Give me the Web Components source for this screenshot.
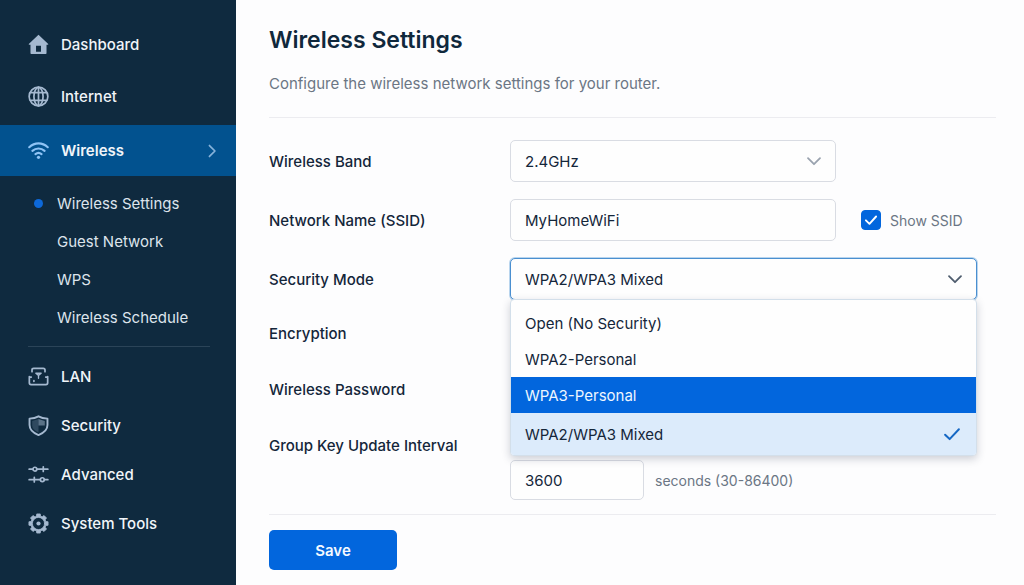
<!DOCTYPE html>
<html lang="en">
<head>
<meta charset="utf-8">
<meta name="viewport" content="width=device-width, initial-scale=1">
<title>Wireless Settings</title>
<style>
  html, body { margin: 0; min-height: 100%; }
  body {
    background: #fdfdfe;
    color: #14263a;
    font-family: Inter, "Liberation Sans", sans-serif;
    font-size: 15px;
    line-height: 25px;
    --navy: #0f2a3f;
    --blue: #0266dd;
    --muted: #6b7684;
    --line: #ececf0;
  }
</style>
</head>
<body>
<router-app>
  <side-nav slot="nav">
    <nav-item icon="home" class="tall">Dashboard</nav-item>
    <nav-item icon="globe" class="tall">Internet</nav-item>
    <nav-item icon="wifi" active>Wireless</nav-item>
    <sub-nav>
      <sub-item current>Wireless Settings</sub-item>
      <sub-item>Guest Network</sub-item>
      <sub-item>WPS</sub-item>
      <sub-item>Wireless Schedule</sub-item>
    </sub-nav>
    <nav-item icon="lan">LAN</nav-item>
    <nav-item icon="shield">Security</nav-item>
    <nav-item icon="sliders">Advanced</nav-item>
    <nav-item icon="gear">System Tools</nav-item>
  </side-nav>
  <page-header>
    <span slot="title">Wireless Settings</span>
    Configure the wireless network settings for your router.
  </page-header>
  <settings-form>
    <select-field label="Wireless Band" value="2.4GHz"></select-field>
    <text-field label="Network Name (SSID)" value="MyHomeWiFi">
      <check-field checked label="Show SSID"></check-field>
    </text-field>
    <select-field label="Security Mode" value="WPA2/WPA3 Mixed" wide open>
      <option-item>Open (No Security)</option-item>
      <option-item>WPA2-Personal</option-item>
      <option-item highlighted>WPA3-Personal</option-item>
      <option-item chosen>WPA2/WPA3 Mixed</option-item>
    </select-field>
    <select-field label="Encryption" compact></select-field>
    <text-field label="Wireless Password" type="password" compact></text-field>
    <text-field label="Group Key Update Interval" value="3600" short>seconds (30-86400)</text-field>
    <save-button slot="actions">Save</save-button>
  </settings-form>
</router-app>

<script>
  const define = (name, css, html) => {
    customElements.define(name, class extends HTMLElement {
      constructor() {
        super();
        const root = this.attachShadow({ mode: 'open' });
        root.innerHTML = `<style>*{box-sizing:border-box}${css}</style>` +
          (typeof html === 'function' ? html(this) : html);
      }
    });
  };

  const svg = (size, body) =>
    `<svg width="${size}" height="${size}" viewBox="0 0 22 22" fill="none" stroke="currentColor" stroke-width="1.8" stroke-linecap="round" stroke-linejoin="round" aria-hidden="true">${body}</svg>`;

  const gearPath = (() => {
    const points = [];
    const step = Math.PI / 4;
    for (let i = 0; i < 8; i++) {
      const a = i * step - Math.PI / 2;
      for (const [offset, r] of [[-0.28, 8], [-0.18, 10.2], [0.18, 10.2], [0.28, 8]]) {
        points.push(`${(11 + r * Math.cos(a + offset)).toFixed(2)} ${(11 + r * Math.sin(a + offset)).toFixed(2)}`);
      }
    }
    return `M${points.join('L')}Z`;
  })();

  const icons = {
    home: '<path fill="currentColor" stroke="none" fill-rule="evenodd" d="M11 .8 21.2 10.4Q21.6 11.2 20.6 11.2H19.4V20.2Q19.4 21 18.6 21H3.4Q2.6 21 2.6 20.2V11.2H1.4Q.4 11.2.8 10.4ZM8.4 12.4V18.6H13.6V12.4Z"/>',
    globe: '<circle cx="11" cy="11" r="9.8"/><ellipse cx="11" cy="11" rx="4.8" ry="9.6"/><path d="M11 1.4V20.6M2.5 7H19.5M2.5 15H19.5"/>',
    wifi: '<path stroke-width="2.2" d="M1.3 7.6C7 2.2 15 2.2 20.7 7.6M4.6 11.4C8.3 8 13.7 8 17.4 11.4M7.8 14.8C9.7 13.2 12.3 13.2 14.2 14.8"/><circle cx="11" cy="18.2" r="1.7" fill="currentColor" stroke="none"/>',
    lan: '<path d="M4.2 6V4.2Q4.2 2.4 6 2.4H16Q17.8 2.4 17.8 4.2V6M1.4 11V17.6Q1.4 19.4 3.2 19.4H18.8Q20.6 19.4 20.6 17.6V11M1.4 11.6H3.4M18.6 11.6H20.6M6.2 15.4V16"/><path stroke-width="1.4" d="M8.2 7.6H13.8L11 9.8ZM11 9.4V12.8"/>',
    shield: '<path fill="currentColor" stroke="none" opacity=".5" d="M11 4.2 17.6 6.2V11H11Z"/><path fill="currentColor" stroke="none" opacity=".22" d="M4.4 6.2 11 4.2V18.4Q4.4 15.4 4.4 11Z"/><path stroke-width="2" d="M11 1.4Q14.8 3.6 20.4 3.8V10.6C20.4 15.8 16.4 19 11 21C5.6 19 1.6 15.8 1.6 10.6V3.8Q7.2 3.6 11 1.4Z"/>',
    sliders: '<path d="M1.2 5.4H5M9.4 5.4H20.8M16 3V7.8M1.2 16.4H12.8M17.4 16.4H20.8M6.6 14V18.8"/><circle cx="7.2" cy="5.4" r="2"/><circle cx="15" cy="16.4" r="2"/>',
    gear: `<path fill="currentColor" fill-rule="evenodd" stroke-width=".8" d="${gearPath}M17.4 11A6.4 6.4 0 1 0 4.6 11A6.4 6.4 0 1 0 17.4 11Z"/><circle cx="11" cy="11" r="2.2" fill="currentColor" stroke="none"/>`
  };

  const chevronDown = svg(22, '<path d="M5 8.2 11 14.2 17 8.2"/>');

  define('router-app', `
    :host { display: grid; grid-template-columns: 236px minmax(0, 1fr); min-height: 100vh; }
    main { padding: 22px 28px 15px 33px; }
  `, '<slot name="nav"></slot><main><slot></slot></main>');

  define('side-nav', `
    :host { display: block; background: var(--navy); padding-top: 18px; }
  `, '<nav aria-label="Main"><slot></slot></nav>');

  define('nav-item', `
    :host { display: block; color: #f1f5f9; font-weight: 500; }
    a { display: flex; align-items: center; gap: 12px; height: 49px; padding: 0 16px 0 28px; color: inherit; text-decoration: none; }
    .icon { display: flex; color: #a5b9d0; width: 21px; }
    .arrow { display: none; margin-left: auto; color: #86b2da; }
    svg { display: block; flex: none; }
    :host(.tall) a { height: 52px; }
    :host([active]) { margin-top: 3px; }
    :host([active]) a { height: 51px; background: #02528f; font-weight: 600; }
    :host([active]) .icon { color: #8fc3f5; }
    :host([active]) .arrow { display: block; }
  `, el => `<a href="#"><span class="icon">${svg(21, icons[el.getAttribute('icon')])}</span><slot></slot><span class="arrow">${svg(16, '<path stroke-width="2.4" d="M7.5 3.5 15 11 7.5 18.5"/>')}</span></a>`);

  define('sub-nav', `
    :host { display: block; margin: 0 26px 5px 28px; padding: 8px 0 10px; border-bottom: 1px solid #2b4458; }
  `, '<slot></slot>');

  define('sub-item', `
    :host { display: block; color: #dde4ec; }
    a { display: grid; grid-template-columns: 21px 1fr; align-items: center; column-gap: 8px; height: 38px; color: inherit; text-decoration: none; }
    .dot { width: 9px; height: 9px; border-radius: 50%; justify-self: center; }
    :host([current]) .dot { background: #0d68d8; }
  `, '<a href="#"><span class="dot"></span><slot></slot></a>');

  define('page-header', `
    :host { display: block; border-bottom: 1px solid var(--line); padding-bottom: 21px; }
    h1 { margin: 0; font-size: 23px; line-height: 36px; font-weight: 600; color: #10283c; }
    p { margin: 13px 0 0; color: var(--muted); }
  `, '<h1><slot name="title"></slot></h1><p><slot></slot></p>');

  define('settings-form', `
    :host { display: block; }
    .rows { padding: 22px 0 14px; border-bottom: 1px solid var(--line); }
    .actions { padding-top: 15px; }
  `, '<form><div class="rows"><slot></slot></div><div class="actions"><slot name="actions"></slot></div></form>');

  const fieldCss = `
    :host { display: grid; grid-template-columns: 241px minmax(0, 1fr); align-items: center; margin-bottom: 17px; }
    :host([compact]) { margin-bottom: 16px; }
    label { font-weight: 500; }
    input, select {
      width: 100%; height: 42px; margin: 0; padding: 0 14px; border: 1px solid #d9dce3; border-radius: 5px;
      background: #fefefe; color: inherit; font: inherit; appearance: none; outline: none;
    }
    :host([compact]) input, :host([compact]) select { height: 40px; }
  `;

  define('select-field', fieldCss + `
    .box { position: relative; display: grid; width: 326px; max-width: 100%; align-items: center; }
    .box > select, .box > svg { grid-area: 1 / 1; }
    .box > svg { justify-self: end; margin-right: 11px; color: #9aa3af; pointer-events: none; }
    .menu { display: none; }
    :host([wide]) { margin-bottom: 13px; }
    :host([wide]) .box { width: auto; margin-right: 19px; }
    :host([open]) select { border-color: #4a8fd0; box-shadow: 0 0 0 1px #b9d5ee; }
    :host([open]) .box > svg { color: #4f5d6e; }
    :host([open]) .menu {
      display: block; position: absolute; z-index: 2; top: calc(100% - 1px); left: 0; right: 0; padding-top: 5px; overflow: hidden;
      background: #fefefe; border: 1px solid #d3dfea; border-radius: 4px; box-shadow: 0 3px 9px rgba(30, 40, 70, .22);
    }
  `, el => {
    const value = el.getAttribute('value');
    return `<label for="control">${el.getAttribute('label')}</label>
      <div class="box"><select id="control">${value ? `<option>${value}</option>` : ''}</select>${chevronDown}
      <div class="menu" role="listbox"><slot></slot></div></div>`;
  });

  define('option-item', `
    :host { display: block; }
    button { display: flex; align-items: center; justify-content: space-between; width: 100%; height: 36px; padding: 0 14px; border: 0; background: none; color: inherit; font: inherit; text-align: left; }
    svg { display: none; color: #1668c4; }
    :host([highlighted]) button { background: var(--blue); color: #eef6ff; }
    :host([chosen]) button { height: 42px; background: #dcebfb; }
    :host([chosen]) svg { display: block; }
  `, el => `<button type="button" role="option" aria-selected="${el.hasAttribute('chosen')}"><slot></slot>${svg(20, '<path stroke-width="2.2" d="M3.4 11.8 8.4 16.6 18.6 5.8"/>')}</button>`);

  define('text-field', fieldCss + `
    .box { display: flex; align-items: center; gap: 25px; }
    input { width: 326px; flex: 0 1 auto; }
    .after { color: var(--muted); flex: none; font-size: 14px; }
    :host([short]) { align-items: start; margin-bottom: 0; }
    :host([short]) label { line-height: 41px; }
    :host([short]) .box { gap: 11px; padding-top: 35px; }
    :host([short]) input { width: 134px; height: 40px; }
  `, el => `<label for="control">${el.getAttribute('label')}</label>
    <div class="box"><input id="control" type="${el.getAttribute('type') || 'text'}" value="${el.getAttribute('value') || ''}"><span class="after"><slot></slot></span></div>`);

  define('check-field', `
    :host { display: block; }
    label { display: flex; align-items: center; gap: 9px; }
    .tick { display: grid; place-items: center; color: #fff; }
    .tick > * { grid-area: 1 / 1; }
    input { appearance: none; width: 20px; height: 20px; margin: 0; border: 1px solid #b9c0ca; border-radius: 4px; background: #fff; }
    input:checked { border-color: var(--blue); background: var(--blue); }
    svg { z-index: 1; pointer-events: none; }
  `, el => `<label><span class="tick"><input type="checkbox" ${el.hasAttribute('checked') ? 'checked' : ''}>${svg(14, '<path stroke-width="3" d="M3 11.5 8.6 17 19 5.5"/>')}</span><span>${el.getAttribute('label')}</span></label>`);

  define('save-button', `
    :host { display: block; }
    button { min-width: 128px; height: 40px; border: 0; border-radius: 5px; background: var(--blue); color: #f4f9ff; font: inherit; font-weight: 600; }
  `, '<button type="submit"><slot></slot></button>');
</script>
</body>
</html>
